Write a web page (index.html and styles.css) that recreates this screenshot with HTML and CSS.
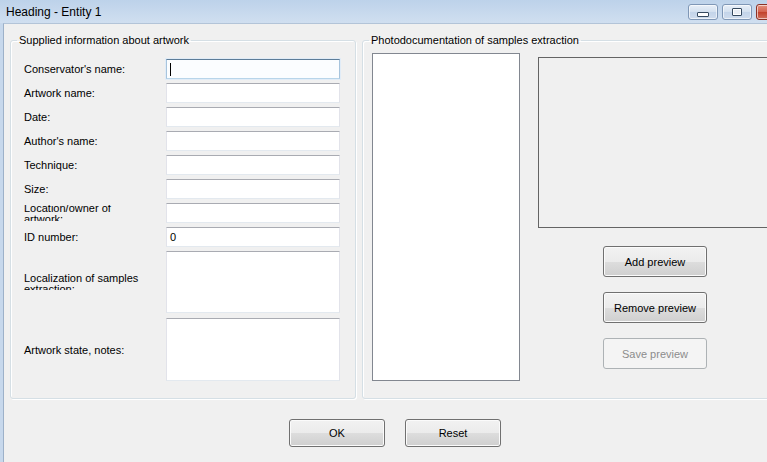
FILE: index.html
```html
<!DOCTYPE html>
<html>
<head>
<meta charset="utf-8">
<link rel="stylesheet" href="styles.css">
</head>
<body>
<div class="window">
  <div class="titlebar">
    <span class="title">Heading - Entity 1</span>
    <div class="caption-btns">
      <span class="cbtn"><i class="glyph-min"></i></span>
      <span class="cbtn"><i class="glyph-max"></i></span>
      <span class="cbtn close"><i class="glyph-close">&#x2715;</i></span>
    </div>
  </div>
  <div class="frame">
    <div class="client">
      <div class="groups">
        <fieldset class="group group-left">
          <legend>Supplied information about artwork</legend>
          <div class="form">
            <div class="lbl">Conservator's name:</div>
            <div class="tb focus"><span class="caret"></span></div>
            <div class="lbl">Artwork name:</div>
            <div class="tb"></div>
            <div class="lbl">Date:</div>
            <div class="tb"></div>
            <div class="lbl">Author's name:</div>
            <div class="tb"></div>
            <div class="lbl">Technique:</div>
            <div class="tb"></div>
            <div class="lbl">Size:</div>
            <div class="tb"></div>
            <div class="lbl"><div class="clip"><div class="clip-text">Location/owner of artwork:</div></div></div>
            <div class="tb"></div>
            <div class="lbl">ID number:</div>
            <div class="tb"><span class="val">0</span></div>
            <div class="lbl"><div class="clip clip-tall"><div class="clip-text">Localization of samples extraction:</div></div></div>
            <div class="tb tall-1"></div>
            <div class="lbl">Artwork state, notes:</div>
            <div class="tb tall-2"></div>
          </div>
        </fieldset>
        <fieldset class="group group-right">
          <legend>Photodocumentation of samples extraction</legend>
          <div class="photo">
            <div class="listbox"></div>
            <div class="preview-col">
              <div class="picture"></div>
              <div class="btn side">Add preview</div>
              <div class="btn side">Remove preview</div>
              <div class="btn side disabled">Save preview</div>
            </div>
          </div>
        </fieldset>
      </div>
      <div class="actions">
        <div class="btn main">OK</div>
        <div class="btn main">Reset</div>
      </div>
    </div>
  </div>
</div>
</body>
</html>
```

FILE: styles.css
```css
html, body {
  margin: 0;
  padding: 0;
  width: 767px;
  height: 462px;
  overflow: hidden;
  background: #f0f0f0;
}

.window {
  width: 790px;
  height: 520px;
  display: flex;
  flex-direction: column;
  background: #c7d8ec;
  font-family: "Liberation Sans", Arial, sans-serif;
  font-size: 11px;
  color: #000;
}

.titlebar {
  height: 23px;
  flex: none;
  display: flex;
  align-items: flex-start;
  background: linear-gradient(#bdd2ea, #d0dff0);
}

.title {
  font-size: 12px;
  line-height: 14px;
  margin: 5px 0 0 6px;
  color: #000;
}

.caption-btns {
  margin-left: auto;
  margin-right: 4px;
  margin-top: 4px;
  display: flex;
  gap: 4px;
}

.cbtn {
  width: 28px;
  height: 14px;
  border: 1px solid #7f97b6;
  border-radius: 3px;
  background: linear-gradient(#e8eff8, #d3e0ef 50%, #c3d4e9 51%, #cfdced);
  box-shadow: inset 0 0 0 1px rgba(255,255,255,0.6);
  display: flex;
  align-items: center;
  justify-content: center;
}

.cbtn.close {
  border-color: #8c3226;
  background: linear-gradient(#e4917f, #d3614d 50%, #c2412b 51%, #d0705c);
}

.glyph-min {
  display: block;
  width: 10px;
  height: 3px;
  margin-top: 5px;
  border: 1px solid #35495f;
  border-radius: 1px;
  background: #fff;
}

.glyph-max {
  display: block;
  width: 8px;
  height: 6px;
  border: 1px solid #35495f;
  border-radius: 1px;
  background: #e9eef5;
  box-shadow: inset 0 0 0 1px #fff;
}

.glyph-close {
  font-style: normal;
  color: #fff;
  font-size: 10px;
  font-weight: bold;
  line-height: 10px;
}

.frame {
  flex: 1;
  display: flex;
  padding: 0 3px;
}

.client {
  flex: 1;
  background: #f0f0f0;
  border-left: 1px solid #9db1c9;
  border-top: 1px solid #b3c4d8;
  border-right: 1px solid #9db1c9;
  padding: 9px 7px 0 6px;
  display: flex;
  flex-direction: column;
}

.groups {
  display: flex;
  gap: 6px;
}

.group {
  margin: 0;
  box-sizing: border-box;
  border: 1px solid #d5dfe5;
  border-radius: 3px;
  box-shadow: inset 1px 1px 0 #fff, 1px 1px 0 #fff;
  padding: 12px 15px 14px 6px;
  min-width: 0;
}

.group legend {
  padding: 0 2px;
  line-height: 14px;
  font-size: 11px;
}

.group-left {
  width: 346px;
}

.group-right {
  width: 418px;
  padding: 6px 6px 14px 6px;
}

.form {
  margin-left: 7px;
  display: grid;
  grid-template-columns: 142px 174px;
  grid-template-rows: repeat(8, 20px) 62px 64px;
  row-gap: 4px;
}

.form > :nth-child(19),
.form > :nth-child(20) {
  margin-top: 1px;
}

.lbl {
  display: flex;
  align-items: center;
  white-space: nowrap;
}

.clip {
  height: 16px;
  overflow: hidden;
}

.clip-tall {
  height: 17px;
  margin-top: -1px;
}

.clip-text {
  width: 105px;
  white-space: normal;
  line-height: 11px;
  margin-top: -2px;
}

.clip-tall .clip-text {
  width: 130px;
  margin-top: 0;
}

.tb {
  box-sizing: border-box;
  background: #fff;
  border: 1px solid;
  border-color: #a9abb2 #e2e3ea #e3e9ef #e2e3ea;
  display: flex;
  align-items: center;
  padding-left: 3px;
}

.tb.focus {
  border-color: #5d7d99 #a7c4dd #b8d5ea #a7c4dd;
  background: #fbfdff;
  box-shadow: 0 0 0 1px #e1ecf7;
}

.caret {
  display: block;
  width: 1px;
  height: 13px;
  background: #000;
}

.val {
  font-size: 11px;
  line-height: 13px;
}

.photo {
  display: flex;
  align-items: flex-start;
}

.listbox {
  width: 148px;
  height: 328px;
  box-sizing: border-box;
  margin-left: 3px;
  background: #fff;
  border: 1px solid #828790;
}

.preview-col {
  margin-left: 18px;
  margin-top: 4px;
  width: 234px;
  display: flex;
  flex-direction: column;
  align-items: center;
}

.picture {
  width: 234px;
  height: 171px;
  box-sizing: border-box;
  border: 1px solid #646464;
  background: #f0f0f0;
  margin-bottom: 18px;
}

.btn {
  box-sizing: border-box;
  border: 1px solid #707070;
  border-radius: 3px;
  background: linear-gradient(#f2f2f2, #ebebeb 50%, #dddddd 51%, #cfcfcf);
  box-shadow: inset 0 0 0 1px #fbfbfb;
  display: flex;
  align-items: center;
  justify-content: center;
  font-size: 11px;
  color: #000;
}

.btn.side {
  width: 104px;
  height: 31px;
  margin-bottom: 15px;
}

.btn.disabled {
  border-color: #adb2b5;
  background: #f4f4f4;
  box-shadow: none;
  color: #8c8c8c;
}

.actions {
  display: flex;
  justify-content: center;
  gap: 20px;
  margin-top: 20px;
}

.btn.main {
  width: 96px;
  height: 28px;
}
```
